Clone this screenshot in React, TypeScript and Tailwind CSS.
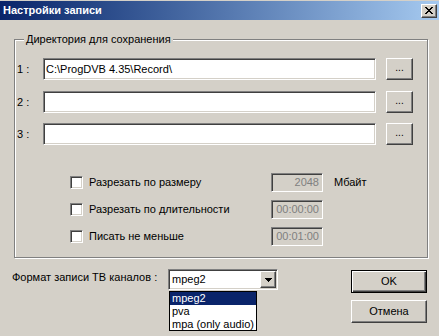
import React from 'react';

const sunken =
  'border border-t-[#808080] border-l-[#808080] border-b-white border-r-white shadow-[inset_1px_1px_0_#404040,inset_-1px_-1px_0_#d4d0c8]';
const raised =
  'bg-[#d4d0c8] border border-t-white border-l-white border-b-[#404040] border-r-[#404040] shadow-[inset_-1px_-1px_0_#808080]';

function CloseButton() {
  return (
    <div className={`${raised} w-[16px] h-[14px] flex items-center justify-center`}>
      <svg width="8" height="7" viewBox="0 0 8 7" shapeRendering="crispEdges">
        <path d="M0 0h2v1h-2zM6 0h2v1h-2zM1 1h2v1h-2zM5 1h2v1h-2zM2 2h4v1h-4zM3 3h2v1h-2zM2 4h4v1h-4zM1 5h2v1h-2zM5 5h2v1h-2zM0 6h2v1h-2zM6 6h2v1h-2z" fill="#000" />
      </svg>
    </div>
  );
}

function PathRow({ n, value, top }: { n: number; value?: string; top: string }) {
  return (
    <div className={`flex items-center h-[22px] ${top}`}>
      <span className="w-[28px] pl-[2px]">{n} :</span>
      <div className={`${sunken} bg-white w-[333px] h-[22px] flex items-center pl-[2px]`}>{value}</div>
      <button className={`${raised} ml-[10px] w-[27px] h-[22px] flex items-end justify-center pb-[5px] text-[10px]`}>
        ...
      </button>
    </div>
  );
}

function OptionRow({ label, value, unit, top }: { label: string; value: string; unit?: string; top: string }) {
  return (
    <div className={`flex items-center h-[19px] ${top}`}>
      <div className={`${sunken} bg-white ml-[55px] w-[13px] h-[13px]`} />
      <span className="ml-[6px] w-[182px]">{label}</span>
      <div className={`${sunken} w-[52px] h-[19px] flex items-center justify-end pr-[3px] text-[#808080]`}>
        {value}
      </div>
      {unit && <span className="ml-[11px]">{unit}</span>}
    </div>
  );
}

export default function App() {
  return (
    <div className="w-[439px] h-[336px] bg-[#d4d0c8] overflow-hidden font-['Liberation_Sans',Arial,sans-serif] text-[11px] leading-[13px] text-black">
      {/* Title bar */}
      <div className="mt-px h-[19px] bg-gradient-to-r from-[#0a246a] to-[#a6caf0] flex items-center justify-between pl-[3px] pr-[2px]">
        <span className="font-bold text-white">Настройки записи</span>
        <CloseButton />
      </div>

      {/* Group box */}
      <div className="mt-[19px] ml-[14px] w-[414px] h-[219px] border border-[#808080] shadow-[1px_1px_0_#fff,inset_1px_1px_0_#fff]">
        <div className="-mt-[7px] ml-[9px] px-[2px] w-fit bg-[#d4d0c8]">Директория для сохранения</div>
        <PathRow n={1} value="C:\ProgDVB 4.35\Record\" top="mt-[12px]" />
        <PathRow n={2} top="mt-[11px]" />
        <PathRow n={3} top="mt-[10px]" />
        <OptionRow label="Разрезать по размеру" value="2048" unit="Мбайт" top="mt-[28px]" />
        <OptionRow label="Разрезать по длительности" value="00:00:00" top="mt-[8px]" />
        <OptionRow label="Писать не меньше" value="00:01:00" top="mt-[8px]" />
      </div>

      {/* Bottom */}
      <div className="flex items-start pl-[12px] pr-[12px]">
        <span className="mt-[13px] w-[156px]">Формат записи ТВ каналов :</span>
        <div className="relative mt-[11px]">
          <div className={`${sunken} bg-white w-[110px] h-[21px] flex items-center justify-between pl-[3px] pr-[1px]`}>
            <span>mpeg2</span>
            <div className={`${raised} w-[16px] h-[17px] flex items-center justify-center`}>
              <svg width="7" height="4" viewBox="0 0 7 4" shapeRendering="crispEdges">
                <path d="M0 0h7v1h-7zM1 1h5v1h-5zM2 2h3v1h-3zM3 3h1v1h-1z" fill="#000" />
              </svg>
            </div>
          </div>
          <div className="absolute left-px top-[22px] w-[88px] border border-black bg-white whitespace-nowrap">
            <div className="h-[13px] bg-[#0a246a] text-white pl-[2px]">mpeg2</div>
            <div className="h-[13px] pl-[2px]">pva</div>
            <div className="h-[12px] pl-[2px]">mpa (only audio)</div>
          </div>
        </div>
        <div className="ml-auto mt-[12px] flex flex-col gap-[7px]">
          <button className="w-[76px] h-[23px] bg-[#d4d0c8] border border-black shadow-[inset_1px_1px_0_#fff,inset_-1px_-1px_0_#404040,inset_-2px_-2px_0_#808080] flex items-center justify-center">
            OK
          </button>
          <button className={`${raised} w-[76px] h-[23px] flex items-center justify-center`}>Отмена</button>
        </div>
      </div>
    </div>
  );
}
